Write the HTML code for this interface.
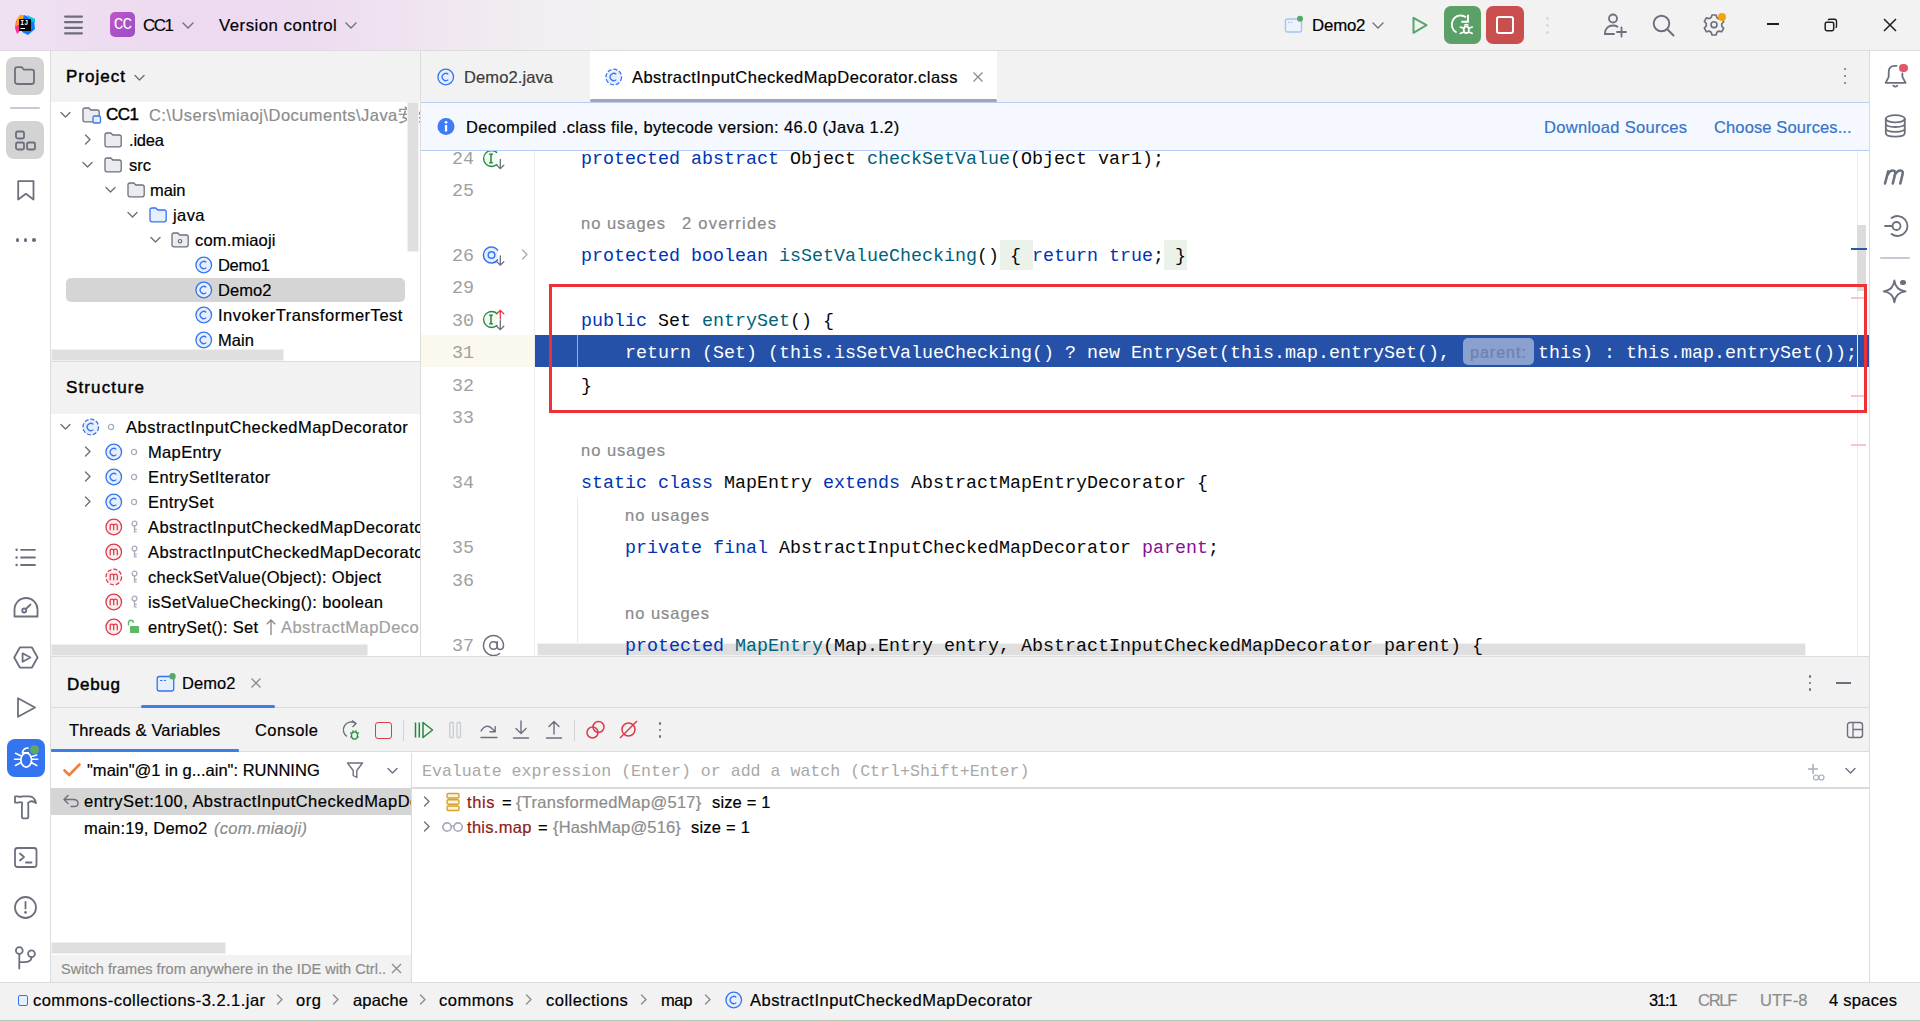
<!DOCTYPE html><html><head><meta charset="utf-8"><style>
*{margin:0;padding:0;box-sizing:border-box}
html,body{width:1920px;height:1021px;overflow:hidden;background:#fff;font-family:"Liberation Sans",sans-serif;color:#000}
.a{position:absolute}
.t{position:absolute;white-space:nowrap;font-size:16.5px;line-height:20px;letter-spacing:0.35px;-webkit-text-stroke:0.2px currentColor}
.m{position:absolute;white-space:pre;font-family:"Liberation Mono",monospace;font-size:18.33px;line-height:32px}
.hl{background:#F2F2F2}
svg{position:absolute;overflow:visible}
</style></head><body>
<div class="a" style="left:0px;top:0px;width:1920px;height:50px;background:linear-gradient(90deg,#EFE1F2 0px,#EDDAF0 170px,#EDDBF0 300px,#F0E6F1 440px,#F2F0F2 560px,#F2F2F2 640px)"></div>
<div class="a" style="left:0px;top:50px;width:1920px;height:1px;background:#DCDCDC"></div>
<div class="a" style="left:0px;top:51px;width:50px;height:932px;background:#FFFFFF"></div>
<div class="a" style="left:50px;top:51px;width:1px;height:932px;background:#DCDCDC"></div>
<div class="a" style="left:1870px;top:51px;width:50px;height:932px;background:#FFFFFF"></div>
<div class="a" style="left:1869px;top:51px;width:1px;height:932px;background:#DCDCDC"></div>
<div class="a" style="left:51px;top:51px;width:369px;height:51px;background:#F2F2F2"></div>
<div class="a" style="left:51px;top:102px;width:369px;height:259px;background:#FFFFFF"></div>
<div class="a" style="left:420px;top:51px;width:1px;height:606px;background:#DCDCDC"></div>
<div class="a" style="left:51px;top:361px;width:369px;height:1px;background:#DCDCDC"></div>
<div class="a" style="left:51px;top:362px;width:369px;height:52px;background:#F2F2F2"></div>
<div class="a" style="left:51px;top:414px;width:369px;height:242px;background:#FFFFFF"></div>
<div class="a" style="left:421px;top:51px;width:1448px;height:52px;background:#F2F2F2"></div>
<div class="a" style="left:590px;top:51px;width:407px;height:52px;background:#FFFFFF"></div>
<div class="a" style="left:421px;top:150px;width:1448px;height:506px;background:#FFFFFF"></div>
<div class="a" style="left:51px;top:656px;width:1818px;height:1px;background:#DCDCDC"></div>
<div class="a" style="left:51px;top:657px;width:1818px;height:51px;background:#F2F2F2"></div>
<div class="a" style="left:51px;top:707px;width:1818px;height:1px;background:#DCDCDC"></div>
<div class="a" style="left:51px;top:708px;width:1818px;height:43px;background:#F2F2F2"></div>
<div class="a" style="left:51px;top:751px;width:1818px;height:1px;background:#DCDCDC"></div>
<div class="a" style="left:51px;top:752px;width:1818px;height:1px;background:#FFFFFF"></div>
<div class="a" style="left:51px;top:753px;width:360px;height:229px;background:#FFFFFF"></div>
<div class="a" style="left:411px;top:753px;width:1px;height:229px;background:#DCDCDC"></div>
<div class="a" style="left:412px;top:753px;width:1457px;height:229px;background:#FFFFFF"></div>
<div class="a" style="left:0px;top:982px;width:1920px;height:1px;background:#DCDCDC"></div>
<div class="a" style="left:0px;top:983px;width:1920px;height:38px;background:#F2F2F2"></div>
<div class="a" style="left:0px;top:1020px;width:1920px;height:1px;background:#B7C4B1"></div>
<svg style="left:14px;top:14px;" width="22" height="22" viewBox="0 0 22 22" fill="none"><polygon points="2,7 6,1 13,2 11,12 3,20 1,14" fill="#FF318C"/>
<polygon points="3,4 7,0.5 10,2 6,10 2,12" fill="#FFB700" opacity=".9"/>
<polygon points="10,1 20,6 21,15 14,21 8,18" fill="#087CFA"/>
<polygon points="13,0.5 21,6 18,10 12,5" fill="#21D789" opacity=".0"/>
<polygon points="13,1 21,5 21,9 15,6" fill="#07C3F2"/>
<rect x="5" y="5" width="12" height="12" fill="#000"/>
<rect x="6.5" y="14" width="4.5" height="1" fill="#fff"/>
<text x="6.3" y="11.2" font-family="Liberation Mono" font-weight="bold" font-size="6.5" fill="#fff">IJ</text></svg>
<svg style="left:63px;top:15px;" width="22" height="20" viewBox="0 0 22 20" fill="none"><rect x="1" y="0.5" width="19" height="2.2" rx="1.1" fill="#6C707E"/><rect x="1" y="6.1" width="19" height="2.2" rx="1.1" fill="#6C707E"/><rect x="1" y="11.7" width="19" height="2.2" rx="1.1" fill="#6C707E"/><rect x="1" y="17.299999999999997" width="19" height="2.2" rx="1.1" fill="#6C707E"/></svg>
<div class="a" style="left:110px;top:12px;width:25px;height:25px;border-radius:5px;background:linear-gradient(135deg,#C257C9 0%,#A951C8 55%,#9A4FC6 100%)"></div>
<div class="a" style="left:110px;top:12px;width:25px;height:25px;color:#fff;font-family:Liberation Mono;font-size:17px;line-height:26px;text-align:center;letter-spacing:-1px;transform:scaleX(0.95)">CC</div>
<div class="t" style="left:143px;top:16px;font-size:17px;letter-spacing:-1.508px;color:#000;">CC1</div>
<svg style="left:182px;top:22px;" width="12" height="7" viewBox="0 0 12 7" fill="none"><polyline points="1,1 6.0,6 11,1" stroke="#6C707E" stroke-width="1.4" fill="none" stroke-linecap="round" stroke-linejoin="round"/></svg>
<div class="t" style="left:219px;top:16px;font-size:16.8px;letter-spacing:0.489px;color:#000;">Version control</div>
<svg style="left:345px;top:22px;" width="12" height="7" viewBox="0 0 12 7" fill="none"><polyline points="1,1 6.0,6 11,1" stroke="#6C707E" stroke-width="1.4" fill="none" stroke-linecap="round" stroke-linejoin="round"/></svg>
<svg style="left:1284px;top:16px;" width="22" height="18" viewBox="0 0 22 18" fill="none"><rect x="1.5" y="3" width="16" height="13" rx="2" stroke="#A8C2F0" stroke-width="1.4" fill="#EDF3FD"/><line x1="4" y1="6.3" x2="9" y2="6.3" stroke="#A8C2F0" stroke-width="1.2" stroke-dasharray="1.5 1.2"/><circle cx="16" cy="2.8" r="3" fill="#55A76A"/></svg>
<div class="t" style="left:1312px;top:16px;font-size:16.8px;letter-spacing:-0.160px;color:#000;">Demo2</div>
<svg style="left:1372px;top:22px;" width="12" height="7" viewBox="0 0 12 7" fill="none"><polyline points="1,1 6.0,6 11,1" stroke="#6C707E" stroke-width="1.4" fill="none" stroke-linecap="round" stroke-linejoin="round"/></svg>
<svg style="left:1411px;top:16px;" width="20" height="20" viewBox="0 0 20 20" fill="none"><path d="M2.5 1.8 L15.5 9.2 L2.5 16.8 Z" stroke="#55A76A" stroke-width="2" fill="none" stroke-linejoin="round"/></svg>
<div class="a" style="left:1444px;top:6px;width:37px;height:38px;border-radius:7px;background:#5AA067"></div>
<svg style="left:1444px;top:6px;" width="37" height="38" viewBox="0 0 37 38" fill="none"><path d="M22 11.2 A9 9 0 1 0 12.6 26.5" stroke="#fff" stroke-width="1.8" fill="none"/><path d="M24 8.8 V15.8 H17.3" stroke="#fff" stroke-width="1.9" fill="none"/><ellipse cx="22.3" cy="23.8" rx="2.6" ry="3.4" stroke="#fff" stroke-width="1.7" fill="none"/><path d="M20.3 19.6 Q22.3 17.3 24.3 19.6" stroke="#fff" stroke-width="1.5" fill="none"/><path d="M16.3 21 L19.6 22.3 M28.3 21 L25 22.3 M16.3 27.5 L19.6 26 M28.3 27.5 L25 26" stroke="#fff" stroke-width="1.6" stroke-linecap="round"/></svg>
<div class="a" style="left:1486px;top:6px;width:38px;height:38px;border-radius:7px;background:#C94F4F"></div>
<div class="a" style="left:1496px;top:16px;width:17.6px;height:17.8px;border:2.2px solid #fff;border-radius:3px"></div>
<div class="a" style="left:1546px;top:17px;width:3px;height:3px;border-radius:50%;background:#D9D9DD"></div>
<div class="a" style="left:1546px;top:24px;width:3px;height:3px;border-radius:50%;background:#D9D9DD"></div>
<div class="a" style="left:1546px;top:31px;width:3px;height:3px;border-radius:50%;background:#D9D9DD"></div>
<svg style="left:1602px;top:11px;" width="28" height="28" viewBox="0 0 28 28" fill="none"><circle cx="11" cy="7.5" r="4" stroke="#6C707E" stroke-width="1.8"/><path d="M3 23 C3 17 7 14.5 11 14.5 C13 14.5 14.5 15 15.5 15.8" stroke="#6C707E" stroke-width="1.8" fill="none" stroke-linecap="round"/><path d="M3 23 H12" stroke="#6C707E" stroke-width="1.8" stroke-linecap="round"/><path d="M19.5 16.5v9M15 21h9" stroke="#6C707E" stroke-width="1.8" stroke-linecap="round"/></svg>
<svg style="left:1651px;top:13px;" width="26" height="26" viewBox="0 0 26 26" fill="none"><circle cx="10.5" cy="10.5" r="7.8" stroke="#6C707E" stroke-width="1.9"/><path d="M16.3 16.3 L22.5 22.5" stroke="#6C707E" stroke-width="2" stroke-linecap="round"/></svg>
<svg style="left:1703px;top:13px;" width="24" height="24" viewBox="0 0 24 24" fill="none"><g transform="translate(0.9 0.6) scale(0.92)"><path d="M8.8 1.5h4.4l.9 3 2.2 1.3 3-.8 2.2 3.8-2.1 2.3v2.6l2.1 2.3-2.2 3.8-3-.8-2.2 1.3-.9 3H8.8l-.9-3-2.2-1.3-3 .8L.5 15.7l2.1-2.3v-2.6L.5 8.5l2.2-3.8 3 .8 2.2-1.3z" stroke="#6C707E" stroke-width="1.8" stroke-linejoin="round" fill="none"/><circle cx="11" cy="12.1" r="3.2" stroke="#6C707E" stroke-width="1.8"/></g></svg>
<div class="a" style="left:1718px;top:13px;width:8px;height:8px;border-radius:50%;background:#F2A40C"></div>
<div class="a" style="left:1767px;top:23px;width:12px;height:2px;background:#1E1E1E"></div>
<svg style="left:1823px;top:17px;" width="16" height="16" viewBox="0 0 16 16" fill="none"><rect x="2.2" y="5.2" width="8.5" height="8.5" rx="1.6" stroke="#1E1E1E" stroke-width="1.5"/><path d="M5.3 3.2 Q5.3 2.2 6.5 2.2 H11.5 Q13.5 2.2 13.5 4.2 V9.5 Q13.5 10.6 12.5 10.6" stroke="#1E1E1E" stroke-width="1.4" fill="none"/></svg>
<svg style="left:1883px;top:18px;" width="14" height="14" viewBox="0 0 14 14" fill="none"><path d="M1 1L13 13M13 1L1 13" stroke="#1E1E1E" stroke-width="1.5"/></svg>
<div class="a" style="left:6px;top:57px;width:38px;height:38px;border-radius:8px;background:#D3D3D3"></div>
<svg style="left:13px;top:65px;" width="24" height="22" viewBox="0 0 24 22" fill="none"><path d="M2 4.5 Q2 2.2 4.2 2.2 H8.6 L11 4.6 H18.8 Q21 4.6 21 6.8 V16.8 Q21 19 18.8 19 H4.2 Q2 19 2 16.8 Z" stroke="#6C707E" stroke-width="1.8" fill="none" stroke-linecap="round" stroke-linejoin="round"/></svg>
<div class="a" style="left:10px;top:107px;width:30px;height:2px;background:#C6CAD6;border-radius:1px"></div>
<div class="a" style="left:6px;top:121px;width:38px;height:38px;border-radius:8px;background:#D3D3D3"></div>
<svg style="left:14px;top:130px;" width="24" height="22" viewBox="0 0 24 22" fill="none"><rect x="2" y="1.5" width="8" height="7" rx="1.8" stroke="#6C707E" stroke-width="1.8" fill="none" stroke-linecap="round" stroke-linejoin="round"/><rect x="2" y="12.5" width="8" height="7" rx="1.8" stroke="#6C707E" stroke-width="1.8" fill="none" stroke-linecap="round" stroke-linejoin="round"/><rect x="13" y="12.5" width="8" height="7" rx="1.8" stroke="#6C707E" stroke-width="1.8" fill="none" stroke-linecap="round" stroke-linejoin="round"/></svg>
<svg style="left:16px;top:179px;" width="20" height="24" viewBox="0 0 20 24" fill="none"><path d="M2.2 2.2 H17.5 V20.5 L9.9 14.8 L2.2 20.5 Z" stroke="#6C707E" stroke-width="1.8" fill="none" stroke-linecap="round" stroke-linejoin="round"/></svg>
<div class="a" style="left:15.5px;top:238.2px;width:3.6px;height:3.6px;border-radius:50%;background:#6C707E"></div>
<div class="a" style="left:23.599999999999998px;top:238.2px;width:3.6px;height:3.6px;border-radius:50%;background:#6C707E"></div>
<div class="a" style="left:31.999999999999996px;top:238.2px;width:3.6px;height:3.6px;border-radius:50%;background:#6C707E"></div>
<svg style="left:14px;top:547px;" width="24" height="22" viewBox="0 0 24 22" fill="none"><path d="M7 2.8 H21 M7 10.5 H21 M7 18 H21" stroke="#6C707E" stroke-width="1.8" fill="none" stroke-linecap="round" stroke-linejoin="round"/><circle cx="2.6" cy="2.8" r="1.2" fill="#6C707E"/><circle cx="2.6" cy="10.5" r="1.2" fill="#6C707E"/><circle cx="2.6" cy="18" r="1.2" fill="#6C707E"/></svg>
<svg style="left:12px;top:596px;" width="28" height="24" viewBox="0 0 28 24" fill="none"><path d="M2.5 20.5 V13.5 A11.5 11.5 0 0 1 25.5 13.5 V20.5 Z" stroke="#6C707E" stroke-width="1.8" fill="none" stroke-linecap="round" stroke-linejoin="round"/><circle cx="12.2" cy="14.5" r="2" stroke="#6C707E" stroke-width="1.8" fill="none" stroke-linecap="round" stroke-linejoin="round"/><path d="M13.8 13 L18.5 8.5" stroke="#6C707E" stroke-width="1.8" fill="none" stroke-linecap="round" stroke-linejoin="round"/></svg>
<svg style="left:12px;top:645px;" width="28" height="25" viewBox="0 0 28 25" fill="none"><path d="M8 2.3 H19.8 L25.6 12.5 L19.8 22.7 H8 L2.2 12.5 Z" stroke="#6C707E" stroke-width="1.8" fill="none" stroke-linecap="round" stroke-linejoin="round"/><path d="M10.6 8.3 L18.4 12.5 L10.6 16.7 Z" stroke="#6C707E" stroke-width="1.8" fill="none" stroke-linecap="round" stroke-linejoin="round"/></svg>
<svg style="left:15px;top:696px;" width="24" height="24" viewBox="0 0 24 24" fill="none"><path d="M3 2.2 L20 11.5 L3 20.8 Z" stroke="#6C707E" stroke-width="1.8" fill="none" stroke-linecap="round" stroke-linejoin="round"/></svg>
<div class="a" style="left:7px;top:739px;width:38px;height:38px;border-radius:8px;background:#3574F0"></div>
<svg style="left:12px;top:744px;" width="28" height="28" viewBox="0 0 28 28" fill="none"><ellipse cx="14.2" cy="16" rx="5.3" ry="7.2" stroke="#fff" stroke-width="1.7" fill="none"/><path d="M10.5 8.3 Q11.5 4 16 4" stroke="#fff" stroke-width="1.7" fill="none" stroke-linecap="round"/><path d="M9.8 8.8 H17" stroke="#fff" stroke-width="1.6"/><path d="M2.5 15.2 H8.5 M20 15.2 H25.7 M3.5 9.3 L8.8 11.8 M24.7 11 L19.8 12.5 M3.5 21.5 L8.5 18.8 M24.7 21.5 L19.8 18.8" stroke="#fff" stroke-width="1.6" stroke-linecap="round"/></svg>
<div class="a" style="left:29.5px;top:745px;width:9px;height:9px;border-radius:50%;background:#5FA865"></div>
<svg style="left:13px;top:794px;" width="26" height="27" viewBox="0 0 26 27" fill="none"><path d="M2 2.4 H5.2 Q7.2 3.4 9.2 2.4 H16.5 Q21.5 2.4 23 9.2 Q20 6.4 16.8 7.6 L15.2 8.8 V10.8 L15.3 12 V23 Q15.3 24.3 14 24.3 H10.2 Q8.9 24.3 8.9 23 V12 L9.1 10.8 V8.6 Q7.2 7.6 5.2 8.6 H2 Z" stroke="#6C707E" stroke-width="1.8" fill="none" stroke-linecap="round" stroke-linejoin="round"/></svg>
<svg style="left:13px;top:846px;" width="26" height="24" viewBox="0 0 26 24" fill="none"><rect x="2" y="2" width="21.5" height="19" rx="2.5" stroke="#6C707E" stroke-width="1.8" fill="none" stroke-linecap="round" stroke-linejoin="round"/><path d="M7 7.5 L11 11 L7 14.5 M13 16.5 H18.5" stroke="#6C707E" stroke-width="1.8" fill="none" stroke-linecap="round" stroke-linejoin="round"/></svg>
<svg style="left:13px;top:895px;" width="26" height="26" viewBox="0 0 26 26" fill="none"><circle cx="12.5" cy="12.5" r="10.5" stroke="#6C707E" stroke-width="1.8" fill="none" stroke-linecap="round" stroke-linejoin="round"/><path d="M12.5 7 V13.5" stroke="#6C707E" stroke-width="1.8" fill="none" stroke-linecap="round" stroke-linejoin="round"/><circle cx="12.5" cy="17.4" r="1.3" fill="#6C707E"/></svg>
<svg style="left:14px;top:945px;" width="24" height="26" viewBox="0 0 24 26" fill="none"><circle cx="5.3" cy="5.5" r="3.4" stroke="#6C707E" stroke-width="1.8" fill="none" stroke-linecap="round" stroke-linejoin="round"/><circle cx="17.5" cy="8.8" r="3.4" stroke="#6C707E" stroke-width="1.8" fill="none" stroke-linecap="round" stroke-linejoin="round"/><path d="M5.3 9 V23.5 M17.5 12.2 Q17.5 17 10 17.2 H5.3" stroke="#6C707E" stroke-width="1.8" fill="none" stroke-linecap="round" stroke-linejoin="round"/></svg>
<svg style="left:1883px;top:62px;" width="26" height="28" viewBox="0 0 26 28" fill="none"><path d="M13.5 3.8 H12 Q5.7 3.8 5.7 10 V14.8 L2.6 20.8 H22.6 L19.4 14.8 V11.5" stroke="#6C707E" stroke-width="1.8" fill="none" stroke-linecap="round" stroke-linejoin="round"/><path d="M10.3 23.6 Q12.3 25.8 14.3 23.6" stroke="#6C707E" stroke-width="1.8" fill="none" stroke-linecap="round" stroke-linejoin="round"/></svg>
<div class="a" style="left:1899px;top:63.7px;width:8.6px;height:8.6px;border-radius:50%;background:#E55765"></div>
<svg style="left:1883px;top:113px;" width="26" height="26" viewBox="0 0 26 26" fill="none"><ellipse cx="12.3" cy="5.8" rx="9.5" ry="3.6" stroke="#6C707E" stroke-width="1.8" fill="none" stroke-linecap="round" stroke-linejoin="round"/><path d="M2.8 5.8 V20 Q2.8 23.6 12.3 23.6 Q21.8 23.6 21.8 20 V5.8 M2.8 10.5 Q2.8 14 12.3 14 Q21.8 14 21.8 10.5 M2.8 15.3 Q2.8 18.8 12.3 18.8 Q21.8 18.8 21.8 15.3" stroke="#6C707E" stroke-width="1.8" fill="none" stroke-linecap="round" stroke-linejoin="round"/></svg>
<svg style="left:1882px;top:165px;" width="28" height="22" viewBox="0 0 28 22" fill="none"><path d="M3 18.5 L6.2 6.3 M5.2 10.5 Q7.5 5.5 11 5.5 Q14 5.5 13 9.5 L10.8 18.5 M12.5 10.5 Q15 5.5 18.5 5.5 Q21.5 5.5 20.5 9.5 L18.3 18.5" stroke="#6C707E" stroke-width="2.6" fill="none" stroke-linecap="round" stroke-linejoin="round"/></svg>
<svg style="left:1883px;top:213px;" width="26" height="26" viewBox="0 0 26 26" fill="none"><path d="M8.5 5 A10 10 0 1 1 8.5 21" stroke="#6C707E" stroke-width="1.8" fill="none" stroke-linecap="round" stroke-linejoin="round"/><circle cx="13.5" cy="13" r="4" stroke="#6C707E" stroke-width="1.8" fill="none" stroke-linecap="round" stroke-linejoin="round"/><path d="M2 13 H9.5" stroke="#6C707E" stroke-width="1.8" fill="none" stroke-linecap="round" stroke-linejoin="round"/></svg>
<div class="a" style="left:1880px;top:257px;width:30px;height:2px;background:#C6CAD6;border-radius:1px"></div>
<svg style="left:1882px;top:272px;" width="28" height="34" viewBox="0 0 28 34" fill="none"><path d="M12.4 8.3 Q13.4 18.3 23.6 19.3 Q13.4 20.3 12.4 30.3 Q11.4 20.3 1.6 19.3 Q11.4 18.3 12.4 8.3 Z" stroke="#6C707E" stroke-width="1.8" fill="none" stroke-linecap="round" stroke-linejoin="round"/></svg>
<div class="a" style="left:1900.3px;top:279.7px;width:5.8px;height:5.8px;border-radius:50%;background:#6C707E"></div>
<div class="t" style="left:66px;top:67px;font-size:17px;letter-spacing:1.016px;color:#000;-webkit-text-stroke:0.45px currentColor;">Project</div>
<svg style="left:134px;top:74px;" width="12" height="8" viewBox="0 0 12 8" fill="none"><polyline points="1,1.5 5.5,6 10,1.5" stroke="#6C707E" stroke-width="1.4" fill="none" stroke-linecap="round" stroke-linejoin="round"/></svg>
<div class="a" style="left:51px;top:102px;width:369px;height:259px;overflow:hidden">
<div class="a" style="left:-51px;top:-102px;width:1920px;height:1021px">
<div class="a" style="left:66px;top:278px;width:339px;height:24px;background:#D5D5D5;border-radius:5px"></div>
<svg style="left:60px;top:111px;" width="12" height="8" viewBox="0 0 12 8" fill="none"><polyline points="1,1.5 5.5,6 10,1.5" stroke="#6C707E" stroke-width="1.4" fill="none" stroke-linecap="round" stroke-linejoin="round"/></svg>
<svg style="left:82px;top:107px;" width="19" height="16" viewBox="0 0 19 16" fill="none"><path d="M1 3 Q1 1 3 1 H6.8 L8.8 3 H15.2 Q17.2 3 17.2 5 V12.8 Q17.2 14.8 15.2 14.8 H3 Q1 14.8 1 12.8 Z" stroke="#6C707E" stroke-width="1.3" fill="#EBECF0" stroke-linejoin="round"/><rect x="11" y="9" width="7.5" height="7" rx="1.6" stroke="#3574F0" stroke-width="1.3" fill="#E7EFFD"/></svg>
<div class="t" style="left:106px;top:105px;font-size:17px;letter-spacing:-0.508px;color:#000;-webkit-text-stroke:0.45px currentColor;">CC1</div>
<div class="t" style="left:149px;top:105px;font-size:16.5px;letter-spacing:0.000px;color:#8C8C8C;letter-spacing:0.45px">C:\Users\miaoj\Documents\Java安全</div>
<svg style="left:84px;top:134px;" width="8" height="12" viewBox="0 0 8 12" fill="none"><polyline points="1.5,1 6,5.5 1.5,10" stroke="#6C707E" stroke-width="1.4" fill="none" stroke-linecap="round" stroke-linejoin="round"/></svg>
<svg style="left:104px;top:132px;" width="19" height="16" viewBox="0 0 19 16" fill="none"><path d="M1 3 Q1 1 3 1 H6.8 L8.8 3 H15.2 Q17.2 3 17.2 5 V12.8 Q17.2 14.8 15.2 14.8 H3 Q1 14.8 1 12.8 Z" stroke="#6C707E" stroke-width="1.3" fill="#EBECF0" stroke-linejoin="round"/></svg>
<div class="t" style="left:129px;top:130px;font-size:16.5px;letter-spacing:-0.191px;color:#000;">.idea</div>
<svg style="left:82px;top:161px;" width="12" height="8" viewBox="0 0 12 8" fill="none"><polyline points="1,1.5 5.5,6 10,1.5" stroke="#6C707E" stroke-width="1.4" fill="none" stroke-linecap="round" stroke-linejoin="round"/></svg>
<svg style="left:104px;top:157px;" width="19" height="16" viewBox="0 0 19 16" fill="none"><path d="M1 3 Q1 1 3 1 H6.8 L8.8 3 H15.2 Q17.2 3 17.2 5 V12.8 Q17.2 14.8 15.2 14.8 H3 Q1 14.8 1 12.8 Z" stroke="#6C707E" stroke-width="1.3" fill="#EBECF0" stroke-linejoin="round"/></svg>
<div class="t" style="left:129px;top:155px;font-size:16.5px;letter-spacing:0.000px;color:#000;">src</div>
<svg style="left:105px;top:186px;" width="12" height="8" viewBox="0 0 12 8" fill="none"><polyline points="1,1.5 5.5,6 10,1.5" stroke="#6C707E" stroke-width="1.4" fill="none" stroke-linecap="round" stroke-linejoin="round"/></svg>
<svg style="left:127px;top:182px;" width="19" height="16" viewBox="0 0 19 16" fill="none"><path d="M1 3 Q1 1 3 1 H6.8 L8.8 3 H15.2 Q17.2 3 17.2 5 V12.8 Q17.2 14.8 15.2 14.8 H3 Q1 14.8 1 12.8 Z" stroke="#6C707E" stroke-width="1.3" fill="#EBECF0" stroke-linejoin="round"/></svg>
<div class="t" style="left:150px;top:180px;font-size:16.5px;letter-spacing:-0.089px;color:#000;">main</div>
<svg style="left:127px;top:211px;" width="12" height="8" viewBox="0 0 12 8" fill="none"><polyline points="1,1.5 5.5,6 10,1.5" stroke="#6C707E" stroke-width="1.4" fill="none" stroke-linecap="round" stroke-linejoin="round"/></svg>
<svg style="left:149px;top:207px;" width="19" height="16" viewBox="0 0 19 16" fill="none"><path d="M1 3 Q1 1 3 1 H6.8 L8.8 3 H15.2 Q17.2 3 17.2 5 V12.8 Q17.2 14.8 15.2 14.8 H3 Q1 14.8 1 12.8 Z" stroke="#3574F0" stroke-width="1.3" fill="#E7EFFD" stroke-linejoin="round"/></svg>
<div class="t" style="left:173px;top:205px;font-size:16.5px;letter-spacing:0.411px;color:#000;">java</div>
<svg style="left:150px;top:236px;" width="12" height="8" viewBox="0 0 12 8" fill="none"><polyline points="1,1.5 5.5,6 10,1.5" stroke="#6C707E" stroke-width="1.4" fill="none" stroke-linecap="round" stroke-linejoin="round"/></svg>
<svg style="left:171px;top:232px;" width="19" height="16" viewBox="0 0 19 16" fill="none"><path d="M1 3 Q1 1 3 1 H6.8 L8.8 3 H15.2 Q17.2 3 17.2 5 V12.8 Q17.2 14.8 15.2 14.8 H3 Q1 14.8 1 12.8 Z" stroke="#6C707E" stroke-width="1.3" fill="#EBECF0" stroke-linejoin="round"/><circle cx="9" cy="9.2" r="1.7" stroke="#6C707E" stroke-width="1.2" fill="none"/></svg>
<div class="t" style="left:195px;top:230px;font-size:16.5px;letter-spacing:0.182px;color:#000;">com.miaoji</div>
<svg style="left:195px;top:256px;" width="18" height="18" viewBox="0 0 18 18" fill="none"><circle cx="8.75" cy="9" r="7.8" stroke="#3574F0" stroke-width="1.3" fill="#E7EFFD" /><path d="M11.3 6.4 A3.6 3.6 0 1 0 11.3 11.6" stroke="#3574F0" stroke-width="1.3" fill="none"/></svg>
<div class="t" style="left:218px;top:255px;font-size:16.5px;letter-spacing:-0.297px;color:#000;">Demo1</div>
<svg style="left:195px;top:281px;" width="18" height="18" viewBox="0 0 18 18" fill="none"><circle cx="8.75" cy="9" r="7.8" stroke="#3574F0" stroke-width="1.3" fill="#E7EFFD" /><path d="M11.3 6.4 A3.6 3.6 0 1 0 11.3 11.6" stroke="#3574F0" stroke-width="1.3" fill="none"/></svg>
<div class="t" style="left:218px;top:280px;font-size:16.5px;letter-spacing:0.078px;color:#000;">Demo2</div>
<svg style="left:195px;top:306px;" width="18" height="18" viewBox="0 0 18 18" fill="none"><circle cx="8.75" cy="9" r="7.8" stroke="#3574F0" stroke-width="1.3" fill="#E7EFFD" /><path d="M11.3 6.4 A3.6 3.6 0 1 0 11.3 11.6" stroke="#3574F0" stroke-width="1.3" fill="none"/></svg>
<div class="t" style="left:218px;top:305px;font-size:16.5px;letter-spacing:0.515px;color:#000;">InvokerTransformerTest</div>
<svg style="left:195px;top:331px;" width="18" height="18" viewBox="0 0 18 18" fill="none"><circle cx="8.75" cy="9" r="7.8" stroke="#3574F0" stroke-width="1.3" fill="#E7EFFD" /><path d="M11.3 6.4 A3.6 3.6 0 1 0 11.3 11.6" stroke="#3574F0" stroke-width="1.3" fill="none"/></svg>
<div class="t" style="left:218px;top:330px;font-size:16.5px;letter-spacing:0.078px;color:#000;">Main</div>
<svg style="left:149px;top:358px;" width="19" height="16" viewBox="0 0 19 16" fill="none"><path d="M1 3 Q1 1 3 1 H6.8 L8.8 3 H15.2 Q17.2 3 17.2 5 V12.8 Q17.2 14.8 15.2 14.8 H3 Q1 14.8 1 12.8 Z" stroke="#6C707E" stroke-width="1.3" fill="#EBECF0" stroke-linejoin="round"/></svg>
</div></div>
<div class="a" style="left:407px;top:102px;width:12px;height:150px;background:#DFDFDF;border:1px solid #F0F0F0;border-radius:1px"></div>
<div class="a" style="left:51px;top:349px;width:233px;height:12px;background:#DFDFDF;border:1px solid #F0F0F0;border-radius:1px"></div>
<div class="t" style="left:66px;top:378px;font-size:17px;letter-spacing:1.131px;color:#000;-webkit-text-stroke:0.45px currentColor;">Structure</div>
<div class="a" style="left:51px;top:414px;width:369px;height:242px;overflow:hidden">
<div class="a" style="left:-51px;top:-414px;width:1920px;height:1021px">
<svg style="left:60px;top:423px;" width="12" height="8" viewBox="0 0 12 8" fill="none"><polyline points="1,1.5 5.5,6 10,1.5" stroke="#6C707E" stroke-width="1.4" fill="none" stroke-linecap="round" stroke-linejoin="round"/></svg>
<svg style="left:82px;top:418px;" width="18" height="18" viewBox="0 0 18 18" fill="none"><circle cx="8.75" cy="9" r="7.8" stroke="#3574F0" stroke-width="1.3" fill="#E7EFFD" stroke-dasharray="4.2 1.8"/><path d="M11.3 6.4 A3.6 3.6 0 1 0 11.3 11.6" stroke="#3574F0" stroke-width="1.3" fill="none"/></svg>
<svg style="left:107px;top:423px;" width="8" height="8" viewBox="0 0 8 8" fill="none"><circle cx="4" cy="4" r="2.6" stroke="#A8ADBD" stroke-width="1.3" fill="none"/></svg>
<div class="t" style="left:126px;top:417px;font-size:16.5px;letter-spacing:0.482px;color:#000;">AbstractInputCheckedMapDecorator</div>
<svg style="left:84px;top:446px;" width="8" height="12" viewBox="0 0 8 12" fill="none"><polyline points="1.5,1 6,5.5 1.5,10" stroke="#6C707E" stroke-width="1.4" fill="none" stroke-linecap="round" stroke-linejoin="round"/></svg>
<svg style="left:105px;top:443px;" width="18" height="18" viewBox="0 0 18 18" fill="none"><circle cx="8.75" cy="9" r="7.8" stroke="#3574F0" stroke-width="1.3" fill="#E7EFFD" /><path d="M11.3 6.4 A3.6 3.6 0 1 0 11.3 11.6" stroke="#3574F0" stroke-width="1.3" fill="none"/></svg>
<svg style="left:130px;top:448px;" width="8" height="8" viewBox="0 0 8 8" fill="none"><circle cx="4" cy="4" r="2.6" stroke="#A8ADBD" stroke-width="1.3" fill="none"/></svg>
<div class="t" style="left:148px;top:442px;font-size:16.5px;letter-spacing:0.344px;color:#000;">MapEntry</div>
<svg style="left:84px;top:471px;" width="8" height="12" viewBox="0 0 8 12" fill="none"><polyline points="1.5,1 6,5.5 1.5,10" stroke="#6C707E" stroke-width="1.4" fill="none" stroke-linecap="round" stroke-linejoin="round"/></svg>
<svg style="left:105px;top:468px;" width="18" height="18" viewBox="0 0 18 18" fill="none"><circle cx="8.75" cy="9" r="7.8" stroke="#3574F0" stroke-width="1.3" fill="#E7EFFD" /><path d="M11.3 6.4 A3.6 3.6 0 1 0 11.3 11.6" stroke="#3574F0" stroke-width="1.3" fill="none"/></svg>
<svg style="left:130px;top:473px;" width="8" height="8" viewBox="0 0 8 8" fill="none"><circle cx="4" cy="4" r="2.6" stroke="#A8ADBD" stroke-width="1.3" fill="none"/></svg>
<div class="t" style="left:148px;top:467px;font-size:16.5px;letter-spacing:0.433px;color:#000;">EntrySetIterator</div>
<svg style="left:84px;top:496px;" width="8" height="12" viewBox="0 0 8 12" fill="none"><polyline points="1.5,1 6,5.5 1.5,10" stroke="#6C707E" stroke-width="1.4" fill="none" stroke-linecap="round" stroke-linejoin="round"/></svg>
<svg style="left:105px;top:493px;" width="18" height="18" viewBox="0 0 18 18" fill="none"><circle cx="8.75" cy="9" r="7.8" stroke="#3574F0" stroke-width="1.3" fill="#E7EFFD" /><path d="M11.3 6.4 A3.6 3.6 0 1 0 11.3 11.6" stroke="#3574F0" stroke-width="1.3" fill="none"/></svg>
<svg style="left:130px;top:498px;" width="8" height="8" viewBox="0 0 8 8" fill="none"><circle cx="4" cy="4" r="2.6" stroke="#A8ADBD" stroke-width="1.3" fill="none"/></svg>
<div class="t" style="left:148px;top:492px;font-size:16.5px;letter-spacing:0.321px;color:#000;">EntrySet</div>
<svg style="left:105px;top:518px;" width="18" height="18" viewBox="0 0 18 18" fill="none"><circle cx="8.75" cy="9" r="7.8" stroke="#DB3B4B" stroke-width="1.3" fill="#FDEDEE" /><path d="M5.2 12.2 V6.4 M5.2 7.8 Q5.2 6.1 6.8 6.1 Q8.7 6.1 8.7 7.8 V12.2 M8.7 7.8 Q8.7 6.1 10.4 6.1 Q12.3 6.1 12.3 7.8 V12.2" stroke="#DB3B4B" stroke-width="1.25" fill="none"/></svg>
<svg style="left:131px;top:520px;" width="8" height="14" viewBox="0 0 8 14" fill="none"><circle cx="3.5" cy="3.6" r="2.4" stroke="#A8ADBD" stroke-width="1.3" fill="none"/><path d="M3.5 6 V12.5 M3.5 9.3 H5.8 M3.5 11.8 H5.8" stroke="#A8ADBD" stroke-width="1.3"/></svg>
<div class="t" style="left:148px;top:517px;font-size:16.5px;letter-spacing:0.000px;color:#000;letter-spacing:0.47px">AbstractInputCheckedMapDecorator(Map)</div>
<svg style="left:105px;top:543px;" width="18" height="18" viewBox="0 0 18 18" fill="none"><circle cx="8.75" cy="9" r="7.8" stroke="#DB3B4B" stroke-width="1.3" fill="#FDEDEE" /><path d="M5.2 12.2 V6.4 M5.2 7.8 Q5.2 6.1 6.8 6.1 Q8.7 6.1 8.7 7.8 V12.2 M8.7 7.8 Q8.7 6.1 10.4 6.1 Q12.3 6.1 12.3 7.8 V12.2" stroke="#DB3B4B" stroke-width="1.25" fill="none"/></svg>
<svg style="left:131px;top:545px;" width="8" height="14" viewBox="0 0 8 14" fill="none"><circle cx="3.5" cy="3.6" r="2.4" stroke="#A8ADBD" stroke-width="1.3" fill="none"/><path d="M3.5 6 V12.5 M3.5 9.3 H5.8 M3.5 11.8 H5.8" stroke="#A8ADBD" stroke-width="1.3"/></svg>
<div class="t" style="left:148px;top:542px;font-size:16.5px;letter-spacing:0.000px;color:#000;letter-spacing:0.47px">AbstractInputCheckedMapDecorator(Map)</div>
<svg style="left:105px;top:568px;" width="18" height="18" viewBox="0 0 18 18" fill="none"><circle cx="8.75" cy="9" r="7.8" stroke="#DB3B4B" stroke-width="1.3" fill="#FDEDEE" stroke-dasharray="4.2 1.8"/><path d="M5.2 12.2 V6.4 M5.2 7.8 Q5.2 6.1 6.8 6.1 Q8.7 6.1 8.7 7.8 V12.2 M8.7 7.8 Q8.7 6.1 10.4 6.1 Q12.3 6.1 12.3 7.8 V12.2" stroke="#DB3B4B" stroke-width="1.25" fill="none"/></svg>
<svg style="left:131px;top:570px;" width="8" height="14" viewBox="0 0 8 14" fill="none"><circle cx="3.5" cy="3.6" r="2.4" stroke="#A8ADBD" stroke-width="1.3" fill="none"/><path d="M3.5 6 V12.5 M3.5 9.3 H5.8 M3.5 11.8 H5.8" stroke="#A8ADBD" stroke-width="1.3"/></svg>
<div class="t" style="left:148px;top:567px;font-size:16.5px;letter-spacing:0.310px;color:#000;">checkSetValue(Object): Object</div>
<svg style="left:105px;top:593px;" width="18" height="18" viewBox="0 0 18 18" fill="none"><circle cx="8.75" cy="9" r="7.8" stroke="#DB3B4B" stroke-width="1.3" fill="#FDEDEE" /><path d="M5.2 12.2 V6.4 M5.2 7.8 Q5.2 6.1 6.8 6.1 Q8.7 6.1 8.7 7.8 V12.2 M8.7 7.8 Q8.7 6.1 10.4 6.1 Q12.3 6.1 12.3 7.8 V12.2" stroke="#DB3B4B" stroke-width="1.25" fill="none"/></svg>
<svg style="left:131px;top:595px;" width="8" height="14" viewBox="0 0 8 14" fill="none"><circle cx="3.5" cy="3.6" r="2.4" stroke="#A8ADBD" stroke-width="1.3" fill="none"/><path d="M3.5 6 V12.5 M3.5 9.3 H5.8 M3.5 11.8 H5.8" stroke="#A8ADBD" stroke-width="1.3"/></svg>
<div class="t" style="left:148px;top:592px;font-size:16.5px;letter-spacing:0.347px;color:#000;">isSetValueChecking(): boolean</div>
<svg style="left:105px;top:618px;" width="18" height="18" viewBox="0 0 18 18" fill="none"><circle cx="8.75" cy="9" r="7.8" stroke="#DB3B4B" stroke-width="1.3" fill="#FDEDEE" /><path d="M5.2 12.2 V6.4 M5.2 7.8 Q5.2 6.1 6.8 6.1 Q8.7 6.1 8.7 7.8 V12.2 M8.7 7.8 Q8.7 6.1 10.4 6.1 Q12.3 6.1 12.3 7.8 V12.2" stroke="#DB3B4B" stroke-width="1.25" fill="none"/></svg>
<svg style="left:126px;top:619px;" width="14" height="16" viewBox="0 0 14 16" fill="none"><path d="M2.5 6.5 V4 Q2.5 1.3 5 1.3 Q7.3 1.3 7.3 3.8" stroke="#5FB865" stroke-width="1.4" fill="none"/><rect x="4" y="7" width="9" height="7" fill="#5FB865" rx="0.5"/></svg>
<div class="t" style="left:148px;top:617px;font-size:16.5px;letter-spacing:0.262px;color:#000;">entrySet(): Set</div>
<svg style="left:265px;top:617px;" width="12" height="20" viewBox="0 0 12 20" fill="none"><path d="M6 3V18M1.8 7.2L6 3L10.2 7.2" stroke="#8C8C8C" stroke-width="1.4" fill="none"/></svg>
<div class="t" style="left:281px;top:617px;font-size:16.5px;letter-spacing:0.000px;color:#A0A0A0;letter-spacing:0.47px">AbstractMapDecorator</div>
</div></div>
<div class="a" style="left:51px;top:644px;width:317px;height:12px;background:#DFDFDF;border:1px solid #F0F0F0;border-radius:1px"></div>
<svg style="left:437px;top:68px;" width="18" height="18" viewBox="0 0 18 18" fill="none"><circle cx="8.75" cy="9" r="7.8" stroke="#3574F0" stroke-width="1.3" fill="#E7EFFD" /><path d="M11.3 6.4 A3.6 3.6 0 1 0 11.3 11.6" stroke="#3574F0" stroke-width="1.3" fill="none"/></svg>
<div class="t" style="left:464px;top:67px;font-size:16.5px;letter-spacing:0.108px;color:#3B3B3B;">Demo2.java</div>
<svg style="left:605px;top:68px;" width="18" height="18" viewBox="0 0 18 18" fill="none"><circle cx="8.75" cy="9" r="7.8" stroke="#3574F0" stroke-width="1.3" fill="#E7EFFD" stroke-dasharray="4.2 1.8"/><path d="M11.3 6.4 A3.6 3.6 0 1 0 11.3 11.6" stroke="#3574F0" stroke-width="1.3" fill="none"/></svg>
<div class="t" style="left:632px;top:67px;font-size:16.5px;letter-spacing:0.471px;color:#000;">AbstractInputCheckedMapDecorator.class</div>
<svg style="left:972px;top:71px;" width="12" height="12" viewBox="0 0 12 12" fill="none"><path d="M1.5 1.5L10.5 10.5M10.5 1.5L1.5 10.5" stroke="#8C8C8C" stroke-width="1.3"/></svg>
<div class="a" style="left:590px;top:99px;width:407px;height:3px;background:#A0A6B3;border-radius:2px"></div>
<div class="a" style="left:1843.5px;top:67.6px;width:2.8px;height:2.8px;border-radius:50%;background:#6C707E"></div>
<div class="a" style="left:1843.5px;top:74.6px;width:2.8px;height:2.8px;border-radius:50%;background:#6C707E"></div>
<div class="a" style="left:1843.5px;top:81.6px;width:2.8px;height:2.8px;border-radius:50%;background:#6C707E"></div>
<div class="a" style="left:421px;top:102px;width:1448px;height:1px;background:#B8CDF5"></div>
<div class="a" style="left:421px;top:103px;width:1448px;height:47px;background:#F5F8FE"></div>
<div class="a" style="left:421px;top:150px;width:1448px;height:1px;background:#B8CDF5"></div>
<svg style="left:437px;top:117px;" width="19" height="19" viewBox="0 0 19 19" fill="none"><circle cx="9" cy="9.5" r="8.5" fill="#3E7BF4"/><rect x="7.9" y="8" width="2.3" height="6.5" rx="0.6" fill="#fff"/><circle cx="9.05" cy="5.3" r="1.35" fill="#fff"/></svg>
<div class="t" style="left:466px;top:117px;font-size:16.5px;letter-spacing:0.365px;color:#000;">Decompiled .class file, bytecode version: 46.0 (Java 1.2)</div>
<div class="t" style="left:1544px;top:117px;font-size:16.5px;letter-spacing:0.302px;color:#3574C8;">Download Sources</div>
<div class="t" style="left:1714px;top:117px;font-size:16.5px;letter-spacing:0.120px;color:#3574C8;">Choose Sources...</div>
<div class="a" style="left:421px;top:151px;width:1448px;height:505px;overflow:hidden">
<div class="a" style="left:-421px;top:-151px;width:1920px;height:1021px">
<div class="a" style="left:534px;top:151px;width:1px;height:505px;background:#EBEBEB"></div>
<div class="a" style="left:421px;top:335px;width:113px;height:32px;background:#FBF9EE"></div>
<div class="a" style="left:535px;top:335px;width:1334px;height:32px;background:#2552A8"></div>
<div class="a" style="left:577px;top:335px;width:1px;height:32px;background:#9BB0DA"></div>
<div class="a" style="left:577px;top:497px;width:1px;height:170px;background:#E8E8E8"></div>
<div class="a" style="left:537px;top:643px;width:1269px;height:13px;background:#DFDFDF;border:1px solid #F2F2F2;border-radius:1px"></div>
<div class="m" style="left:452px;top:143.5px;color:#A0A0A0">24</div>
<div class="m" style="left:452px;top:176.0px;color:#A0A0A0">25</div>
<div class="m" style="left:452px;top:240.9px;color:#A0A0A0">26</div>
<div class="m" style="left:452px;top:273.4px;color:#A0A0A0">29</div>
<div class="m" style="left:452px;top:305.9px;color:#A0A0A0">30</div>
<div class="m" style="left:452px;top:338.3px;color:#A0A0A0">31</div>
<div class="m" style="left:452px;top:370.8px;color:#A0A0A0">32</div>
<div class="m" style="left:452px;top:403.3px;color:#A0A0A0">33</div>
<div class="m" style="left:452px;top:468.2px;color:#A0A0A0">34</div>
<div class="m" style="left:452px;top:533.1px;color:#A0A0A0">35</div>
<div class="m" style="left:452px;top:565.6px;color:#A0A0A0">36</div>
<div class="m" style="left:452px;top:630.5px;color:#A0A0A0">37</div>
<div class="m" style="left:581px;top:143.5px"><span style="color:#0033B3">protected abstract </span><span style="color:#080808">Object </span><span style="color:#00627A">checkSetValue</span><span style="color:#080808">(Object var1);</span></div>
<div class="t" style="left:581px;top:212.94px;font-size:16.5px;letter-spacing:0.986px;color:#8A8A8A;">no usages</div>
<div class="t" style="left:682px;top:212.94px;font-size:16.5px;letter-spacing:1.239px;color:#8A8A8A;">2 overrides</div>
<div class="a" style="left:1000px;top:240.41px;width:33px;height:30px;background:#EAF2E9"></div>
<div class="a" style="left:1164px;top:240.41px;width:23px;height:30px;background:#EAF2E9"></div>
<div class="m" style="left:581px;top:240.9px"><span style="color:#0033B3">protected boolean </span><span style="color:#00627A">isSetValueChecking</span><span style="color:#080808">() { </span><span style="color:#0033B3">return true</span><span style="color:#080808">; }</span></div>
<div class="m" style="left:581px;top:305.9px"><span style="color:#0033B3">public </span><span style="color:#080808">Set </span><span style="color:#00627A">entrySet</span><span style="color:#080808">() {</span></div>
<div class="m" style="left:625px;top:338.3px"><span style="color:#FFFFFF">return (Set) (this.isSetValueChecking() ? new EntrySet(this.map.entrySet(), </span></div>
<div class="a" style="left:1463px;top:338px;width:71px;height:27px;background:#8AA0CF;border-radius:5px"></div>
<div class="t" style="left:1470px;top:342.82px;font-size:16px;letter-spacing:1.023px;color:#6E81AE;">parent:</div>
<div class="m" style="left:1538px;top:338.3px;color:#fff">this) : this.map.entrySet());</div>
<div class="m" style="left:581px;top:370.8px"><span style="color:#080808">}</span></div>
<div class="t" style="left:581px;top:440.23px;font-size:16.5px;letter-spacing:0.986px;color:#8A8A8A;">no usages</div>
<div class="m" style="left:581px;top:468.2px"><span style="color:#0033B3">static class </span><span style="color:#080808">MapEntry </span><span style="color:#0033B3">extends </span><span style="color:#080808">AbstractMapEntryDecorator {</span></div>
<div class="t" style="left:625px;top:505.16999999999996px;font-size:16.5px;letter-spacing:0.986px;color:#8A8A8A;">no usages</div>
<div class="m" style="left:625px;top:533.1px"><span style="color:#0033B3">private final </span><span style="color:#080808">AbstractInputCheckedMapDecorator </span><span style="color:#871094">parent</span><span style="color:#080808">;</span></div>
<div class="t" style="left:625px;top:602.5799999999999px;font-size:16.5px;letter-spacing:0.986px;color:#8A8A8A;">no usages</div>
<div class="m" style="left:625px;top:630.5px"><span style="color:#0033B3">protected </span><span style="color:#00627A">MapEntry</span><span style="color:#080808">(Map.Entry entry, AbstractInputCheckedMapDecorator parent) {</span></div>
<svg style="left:483px;top:149.0px;" width="24" height="22" viewBox="0 0 24 22" fill="none"><path d="M14.2 3.8 A8 8 0 1 0 14.2 15.2" stroke="#208A3C" stroke-width="1.3" fill="#F3FAF4"/><path d="M6.2 5.3H9.8M8 5.3V13.7M6.2 13.7H9.8" stroke="#208A3C" stroke-width="1.5"/><path d="M17.3 10.5V19.5M13.8 16.2L17.3 19.6L20.8 16.2" stroke="#6C707E" stroke-width="1.3" fill="none" stroke-linecap="round"/></svg>
<svg style="left:483px;top:246.41px;" width="24" height="22" viewBox="0 0 24 22" fill="none"><path d="M15 4.5 A8 8 0 1 0 15 13.5" stroke="#3574F0" stroke-width="1.5" fill="#E7EFFD"/><circle cx="8.5" cy="9" r="3.3" stroke="#3574F0" stroke-width="1.5" fill="none"/><path d="M17.3 10V19M13.8 15.7L17.3 19.1L20.8 15.7" stroke="#6C707E" stroke-width="1.3" fill="none" stroke-linecap="round"/></svg>
<svg style="left:521px;top:249.41px;" width="8" height="12" viewBox="0 0 8 12" fill="none"><polyline points="1.5,1 6,5.5 1.5,10" stroke="#A8ADBD" stroke-width="1.4" fill="none" stroke-linecap="round" stroke-linejoin="round"/></svg>
<svg style="left:483px;top:310.35px;" width="24" height="22" viewBox="0 0 24 22" fill="none"><path d="M14.2 3.8 A8 8 0 1 0 14.2 15.2" stroke="#208A3C" stroke-width="1.3" fill="#F3FAF4"/><path d="M6.2 5.3H9.8M8 5.3V13.7M6.2 13.7H9.8" stroke="#208A3C" stroke-width="1.5"/><path d="M17.3 10.5V19.5M13.8 16.2L17.3 19.6L20.8 16.2" stroke="#6C707E" stroke-width="1.3" fill="none" stroke-linecap="round"/><path d="M17.3 9V0.5M13.8 3.8L17.3 0.4L20.8 3.8" stroke="#DB3B4B" stroke-width="1.3" fill="none" stroke-linecap="round"/></svg>
<svg style="left:482px;top:634.05px;" width="24" height="24" viewBox="0 0 24 24" fill="none"><circle cx="11.5" cy="11.5" r="3.8" stroke="#6C707E" stroke-width="1.5" fill="none"/><path d="M15.2 7.5V12.5Q15.2 15.5 18 15.5Q21.5 15.5 21.5 11.5A10 10 0 1 0 17.5 19.5" stroke="#6C707E" stroke-width="1.5" fill="none" stroke-linecap="round"/></svg>
</div></div>
<div class="a" style="left:1857px;top:151px;width:1px;height:505px;background:#EBEBEB"></div>
<div class="a" style="left:1857px;top:225px;width:9px;height:66px;background:#DCDCDC"></div>
<div class="a" style="left:1851px;top:248px;width:16px;height:2px;background:#2E55A6"></div>
<div class="a" style="left:1851px;top:297px;width:15px;height:2px;background:#F8C6C8"></div>
<div class="a" style="left:1851px;top:395px;width:15px;height:2px;background:#F8C6C8"></div>
<div class="a" style="left:1851px;top:444px;width:15px;height:2px;background:#F8C6C8"></div>
<div class="a" style="left:549px;top:284px;width:1318px;height:129px;border:3px solid #EE3136"></div>
<div class="t" style="left:67px;top:674.5px;font-size:17px;letter-spacing:0.727px;color:#000;-webkit-text-stroke:0.45px currentColor;">Debug</div>
<svg style="left:156px;top:673px;" width="22" height="20" viewBox="0 0 22 20" fill="none"><rect x="1.2" y="3.5" width="16.5" height="14.5" rx="2.2" stroke="#3574F0" stroke-width="1.3" fill="#E7EFFD"/><path d="M4 7.5H6.5M8 7.5H10" stroke="#3574F0" stroke-width="1.2"/><circle cx="16.5" cy="3.2" r="3.2" fill="#55A76A"/></svg>
<div class="t" style="left:182px;top:673px;font-size:16.5px;letter-spacing:0.078px;color:#000;">Demo2</div>
<svg style="left:250px;top:677px;" width="12" height="12" viewBox="0 0 12 12" fill="none"><path d="M1.5 1.5L10.5 10.5M10.5 1.5L1.5 10.5" stroke="#8C8C8C" stroke-width="1.3"/></svg>
<div class="a" style="left:141px;top:705px;width:134px;height:3px;background:#3F7EE3;border-radius:2px"></div>
<div class="a" style="left:1808.5px;top:675.1px;width:2.8px;height:2.8px;border-radius:50%;background:#6C707E"></div>
<div class="a" style="left:1808.5px;top:681.6px;width:2.8px;height:2.8px;border-radius:50%;background:#6C707E"></div>
<div class="a" style="left:1808.5px;top:688.1px;width:2.8px;height:2.8px;border-radius:50%;background:#6C707E"></div>
<div class="a" style="left:1836px;top:682px;width:15px;height:1.6px;background:#6C707E"></div>
<div class="t" style="left:69px;top:720px;font-size:16.5px;letter-spacing:0.170px;color:#000;">Threads &amp; Variables</div>
<div class="a" style="left:51px;top:749px;width:188px;height:3px;background:#3F7EE3;border-radius:1px"></div>
<div class="t" style="left:255px;top:720px;font-size:16.5px;letter-spacing:0.411px;color:#000;">Console</div>
<svg style="left:340px;top:719px;" width="24" height="24" viewBox="0 0 24 24" fill="none"><path d="M15.5 4.2 A7.5 7.5 0 1 0 7 17.5" stroke="#6C707E" stroke-width="1.4" fill="none"/><polyline points="12,1.5 16,4.5 12.5,8" stroke="#6C707E" stroke-width="1.4" fill="none"/><ellipse cx="14.5" cy="16.5" rx="3" ry="3.6" stroke="#208A3C" stroke-width="1.3" fill="none"/><path d="M10 13.8h1.5M17.5 13.8H19M10 18h1.5M17.5 18H19M12.5 11.5l1 1M16.5 11.5l-1 1" stroke="#208A3C" stroke-width="1.2"/></svg>
<div class="a" style="left:375px;top:722px;width:17px;height:17px;border:1.5px solid #DB3B4B;border-radius:3px"></div>
<div class="a" style="left:403px;top:720px;width:1px;height:21px;background:#D3D3D3"></div>
<svg style="left:413px;top:720px;" width="22" height="20" viewBox="0 0 22 20" fill="none"><path d="M2.5 2.5V17.5M6.3 2.5V17.5" stroke="#208A3C" stroke-width="1.5"/><path d="M10 2.5L19.5 10L10 17.5Z" stroke="#208A3C" stroke-width="1.5" fill="none" stroke-linejoin="round"/></svg>
<svg style="left:448px;top:720px;" width="16" height="20" viewBox="0 0 16 20" fill="none"><rect x="1.8" y="2.5" width="3.5" height="15" rx="0.8" stroke="#C9CCD6" stroke-width="1.3" fill="none"/><rect x="9" y="2.5" width="3.5" height="15" rx="0.8" stroke="#C9CCD6" stroke-width="1.3" fill="none"/></svg>
<svg style="left:479px;top:719px;" width="20" height="22" viewBox="0 0 20 22" fill="none"><path d="M2 12 Q7 4 13 9.5 L16 12.5" stroke="#6C707E" stroke-width="1.4" fill="none" stroke-linecap="round" stroke-linejoin="round"/><path d="M11 12.8H16.2V7.8" stroke="#6C707E" stroke-width="1.4" fill="none" stroke-linecap="round" stroke-linejoin="round"/><path d="M2 18.5H18" stroke="#6C707E" stroke-width="1.4" fill="none" stroke-linecap="round" stroke-linejoin="round"/></svg>
<svg style="left:511px;top:719px;" width="20" height="22" viewBox="0 0 20 22" fill="none"><path d="M10 2V14M5 9.5L10 14.5L15 9.5M2.5 19H17.5" stroke="#6C707E" stroke-width="1.4" fill="none" stroke-linecap="round" stroke-linejoin="round"/></svg>
<svg style="left:544px;top:719px;" width="20" height="22" viewBox="0 0 20 22" fill="none"><path d="M10 15V3M5 7.5L10 2.5L15 7.5M2.5 19H17.5" stroke="#6C707E" stroke-width="1.4" fill="none" stroke-linecap="round" stroke-linejoin="round"/></svg>
<div class="a" style="left:574px;top:720px;width:1px;height:21px;background:#D3D3D3"></div>
<svg style="left:585px;top:719px;" width="22" height="22" viewBox="0 0 22 22" fill="none"><circle cx="7.5" cy="13.5" r="5.5" stroke="#DB3B4B" stroke-width="1.5" fill="none"/><circle cx="13.5" cy="8" r="5.5" stroke="#DB3B4B" stroke-width="1.5" fill="none"/></svg>
<svg style="left:618px;top:719px;" width="22" height="22" viewBox="0 0 22 22" fill="none"><circle cx="10.5" cy="10.5" r="6.5" stroke="#DB3B4B" stroke-width="1.5" fill="none"/><path d="M2 19L19 2" stroke="#DB3B4B" stroke-width="1.5"/></svg>
<div class="a" style="left:658.5px;top:722.1px;width:2.8px;height:2.8px;border-radius:50%;background:#6C707E"></div>
<div class="a" style="left:658.5px;top:728.6px;width:2.8px;height:2.8px;border-radius:50%;background:#6C707E"></div>
<div class="a" style="left:658.5px;top:735.1px;width:2.8px;height:2.8px;border-radius:50%;background:#6C707E"></div>
<svg style="left:1846px;top:721px;" width="18" height="18" viewBox="0 0 18 18" fill="none"><rect x="1.5" y="1.5" width="15" height="15" rx="2.5" stroke="#6C707E" stroke-width="1.4" fill="none"/><path d="M7 1.5V16.5M7 8.5H16.5" stroke="#6C707E" stroke-width="1.3"/></svg>
<svg style="left:62px;top:761px;" width="20" height="18" viewBox="0 0 20 18" fill="none"><path d="M2.5 9.5L7.2 14L17.5 3.5" stroke="#F0813B" stroke-width="2.6" fill="none" stroke-linecap="round" stroke-linejoin="round"/></svg>
<div class="t" style="left:87px;top:760px;font-size:16.5px;letter-spacing:0.012px;color:#000;">"main"@1 in g...ain": RUNNING</div>
<svg style="left:345px;top:760px;" width="20" height="20" viewBox="0 0 20 20" fill="none"><path d="M2.5 3H17.5L11.8 10.5V17.5L8.2 15.5V10.5Z" stroke="#6C707E" stroke-width="1.4" fill="none" stroke-linecap="round" stroke-linejoin="round"/></svg>
<svg style="left:387px;top:767px;" width="12" height="8" viewBox="0 0 12 8" fill="none"><polyline points="1,1.5 5.5,6 10,1.5" stroke="#6C707E" stroke-width="1.4" fill="none" stroke-linecap="round" stroke-linejoin="round"/></svg>
<div class="a" style="left:51px;top:788px;width:360px;height:27px;background:#D5D5D5"></div>
<div class="a" style="left:51px;top:789px;width:360px;height:60px;overflow:hidden">
<div class="a" style="left:-51px;top:-789px;width:1920px;height:1021px">
<svg style="left:62px;top:794px;" width="18" height="14" viewBox="0 0 18 14" fill="none"><path d="M6 1.5L2 5.5L6 9.5" stroke="#6C707E" stroke-width="1.4" fill="none" stroke-linecap="round" stroke-linejoin="round"/><path d="M2.5 5.5H11.5Q16 5.5 16 9.5Q16 12.5 12 12.5H9" stroke="#6C707E" stroke-width="1.4" fill="none" stroke-linecap="round" stroke-linejoin="round"/></svg>
<div class="t" style="left:84px;top:791px;font-size:16.5px;letter-spacing:0.000px;color:#000;letter-spacing:0.47px">entrySet:100, AbstractInputCheckedMapDecorator</div>
</div></div>
<div class="t" style="left:84px;top:818px;font-size:16.5px;letter-spacing:0.167px;color:#000;">main:19, Demo2</div>
<div class="t" style="left:214px;top:818px;font-size:16.5px;letter-spacing:0.276px;color:#8C8C8C;font-style:italic;">(com.miaoji)</div>
<div class="a" style="left:51px;top:942px;width:175px;height:12px;background:#DFDFDF;border:1px solid #F0F0F0;border-radius:1px"></div>
<div class="a" style="left:51px;top:955px;width:360px;height:27px;background:#F2F2F2"></div>
<div class="t" style="left:61px;top:959px;font-size:14.5px;letter-spacing:0.038px;color:#8C8C8C;">Switch frames from anywhere in the IDE with Ctrl..</div>
<svg style="left:391px;top:963px;" width="11" height="11" viewBox="0 0 11 11" fill="none"><path d="M1 1L10 10M10 1L1 10" stroke="#8C8C8C" stroke-width="1.3"/></svg>
<div class="a" style="left:412px;top:787px;width:1457px;height:2px;background:#DADADA"></div>
<div class="m" style="left:422px;top:755.5px;font-size:16.6px;color:#A8A8A8;letter-spacing:0px">Evaluate expression (Enter) or add a watch (Ctrl+Shift+Enter)</div>
<svg style="left:1805px;top:762px;" width="20" height="20" viewBox="0 0 20 20" fill="none"><path d="M8 2V12M3 7H13" stroke="#A8ADBD" stroke-width="1.5"/><circle cx="11" cy="15.5" r="2.5" stroke="#A8ADBD" stroke-width="1.2" fill="none"/><circle cx="16.5" cy="15.5" r="2.5" stroke="#A8ADBD" stroke-width="1.2" fill="none"/></svg>
<svg style="left:1845px;top:767px;" width="12" height="8" viewBox="0 0 12 8" fill="none"><polyline points="1,1.5 5.5,6 10,1.5" stroke="#6C707E" stroke-width="1.4" fill="none" stroke-linecap="round" stroke-linejoin="round"/></svg>
<svg style="left:423px;top:796px;" width="8" height="12" viewBox="0 0 8 12" fill="none"><polyline points="1.5,1 6,5.5 1.5,10" stroke="#6C707E" stroke-width="1.4" fill="none" stroke-linecap="round" stroke-linejoin="round"/></svg>
<svg style="left:445px;top:792px;" width="17" height="20" viewBox="0 0 17 20" fill="none"><rect x="2" y="1.5" width="12" height="4.5" rx="1.5" stroke="#D6A02A" stroke-width="1.4" fill="#FDF3DC"/><rect x="2" y="7.8" width="12" height="4.5" rx="1.5" stroke="#D6A02A" stroke-width="1.4" fill="#FDF3DC"/><rect x="2" y="14" width="12" height="4.5" rx="1.5" stroke="#D6A02A" stroke-width="1.4" fill="#FDF3DC"/></svg>
<div class="t" style="left:467px;top:792px;font-size:16.5px;letter-spacing:0.609px;color:#8F1A1A;">this</div>
<div class="t" style="left:502px;top:792px;font-size:16.5px;letter-spacing:0.000px;color:#000;">=</div>
<div class="t" style="left:516px;top:792px;font-size:16.5px;letter-spacing:0.263px;color:#8C8C8C;">{TransformedMap@517}</div>
<div class="t" style="left:712px;top:792px;font-size:16.5px;letter-spacing:0.141px;color:#000;">size = 1</div>
<svg style="left:423px;top:821px;" width="8" height="12" viewBox="0 0 8 12" fill="none"><polyline points="1.5,1 6,5.5 1.5,10" stroke="#6C707E" stroke-width="1.4" fill="none" stroke-linecap="round" stroke-linejoin="round"/></svg>
<svg style="left:441px;top:820px;" width="24" height="14" viewBox="0 0 24 14" fill="none"><circle cx="6" cy="7" r="4.2" stroke="#A8ADBD" stroke-width="1.7" fill="none"/><circle cx="17" cy="7" r="4.2" stroke="#A8ADBD" stroke-width="1.7" fill="none"/><path d="M10 6H13" stroke="#A8ADBD" stroke-width="1.5"/></svg>
<div class="t" style="left:467px;top:817px;font-size:16.5px;letter-spacing:0.294px;color:#8F1A1A;">this.map</div>
<div class="t" style="left:538px;top:817px;font-size:16.5px;letter-spacing:0.000px;color:#000;">=</div>
<div class="t" style="left:553px;top:817px;font-size:16.5px;letter-spacing:0.158px;color:#8C8C8C;">{HashMap@516}</div>
<div class="t" style="left:691px;top:817px;font-size:16.5px;letter-spacing:0.212px;color:#000;">size = 1</div>
<div class="a" style="left:18px;top:995px;width:10px;height:11px;border:1.4px solid #3574F0;border-radius:2px;background:#E7EFFD"></div>
<div class="t" style="left:33px;top:990px;font-size:16.5px;letter-spacing:0.459px;color:#000;">commons-collections-3.2.1.jar</div>
<div class="t" style="left:296px;top:990px;font-size:16.5px;letter-spacing:0.578px;color:#000;">org</div>
<div class="t" style="left:353px;top:990px;font-size:16.5px;letter-spacing:0.178px;color:#000;">apache</div>
<div class="t" style="left:439px;top:990px;font-size:16.5px;letter-spacing:0.497px;color:#000;">commons</div>
<div class="t" style="left:546px;top:990px;font-size:16.5px;letter-spacing:0.477px;color:#000;">collections</div>
<div class="t" style="left:661px;top:990px;font-size:16.5px;letter-spacing:-0.397px;color:#000;">map</div>
<svg style="left:276px;top:994px;" width="8" height="12" viewBox="0 0 8 12" fill="none"><polyline points="1.5,1 6,5.5 1.5,10" stroke="#8C8C8C" stroke-width="1.4" fill="none" stroke-linecap="round" stroke-linejoin="round"/></svg>
<svg style="left:332px;top:994px;" width="8" height="12" viewBox="0 0 8 12" fill="none"><polyline points="1.5,1 6,5.5 1.5,10" stroke="#8C8C8C" stroke-width="1.4" fill="none" stroke-linecap="round" stroke-linejoin="round"/></svg>
<svg style="left:419px;top:994px;" width="8" height="12" viewBox="0 0 8 12" fill="none"><polyline points="1.5,1 6,5.5 1.5,10" stroke="#8C8C8C" stroke-width="1.4" fill="none" stroke-linecap="round" stroke-linejoin="round"/></svg>
<svg style="left:525px;top:994px;" width="8" height="12" viewBox="0 0 8 12" fill="none"><polyline points="1.5,1 6,5.5 1.5,10" stroke="#8C8C8C" stroke-width="1.4" fill="none" stroke-linecap="round" stroke-linejoin="round"/></svg>
<svg style="left:640px;top:994px;" width="8" height="12" viewBox="0 0 8 12" fill="none"><polyline points="1.5,1 6,5.5 1.5,10" stroke="#8C8C8C" stroke-width="1.4" fill="none" stroke-linecap="round" stroke-linejoin="round"/></svg>
<svg style="left:704px;top:994px;" width="8" height="12" viewBox="0 0 8 12" fill="none"><polyline points="1.5,1 6,5.5 1.5,10" stroke="#8C8C8C" stroke-width="1.4" fill="none" stroke-linecap="round" stroke-linejoin="round"/></svg>
<svg style="left:725px;top:991px;" width="18" height="18" viewBox="0 0 18 18" fill="none"><circle cx="8.75" cy="9" r="7.8" stroke="#3574F0" stroke-width="1.3" fill="#E7EFFD" /><path d="M11.3 6.4 A3.6 3.6 0 1 0 11.3 11.6" stroke="#3574F0" stroke-width="1.3" fill="none"/></svg>
<div class="t" style="left:750px;top:990px;font-size:16.5px;letter-spacing:0.490px;color:#000;">AbstractInputCheckedMapDecorator</div>
<div class="t" style="left:1649px;top:990px;font-size:16.5px;letter-spacing:-1.165px;color:#000;">31:1</div>
<div class="t" style="left:1698px;top:990px;font-size:16.5px;letter-spacing:-1.231px;color:#8C8C8C;">CRLF</div>
<div class="t" style="left:1760px;top:990px;font-size:16.5px;letter-spacing:0.188px;color:#8C8C8C;">UTF-8</div>
<div class="t" style="left:1829px;top:990px;font-size:16.5px;letter-spacing:0.283px;color:#000;">4 spaces</div>
</body></html>
